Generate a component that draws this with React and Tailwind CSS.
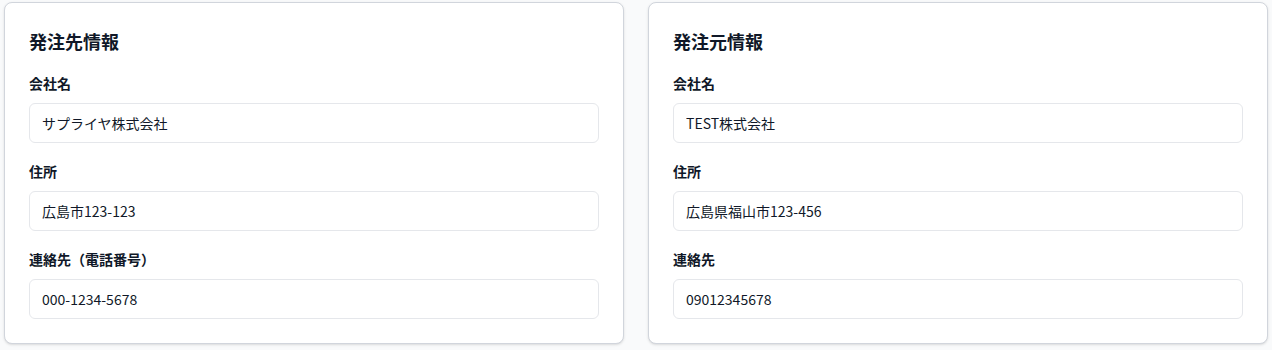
const font = { fontFamily: '"Noto Sans CJK JP", "Noto Sans", sans-serif' }

function Field({ label, value }) {
  return (
    <div>
      <label className="mb-3 block text-sm leading-4 font-semibold text-gray-900">{label}</label>
      <input
        readOnly
        value={value}
        className="h-10 w-full rounded-md border border-gray-200 bg-white px-3 text-sm text-gray-900 outline-none"
        style={font}
      />
    </div>
  )
}

function InfoCard({ title, fields }) {
  return (
    <div className="rounded-lg border border-gray-300 bg-white p-6 shadow-sm">
      <h2 className="mb-5 text-lg font-semibold text-gray-900">{title}</h2>
      <div className="space-y-5">
        {fields.map((f) => (
          <Field key={f.label} label={f.label} value={f.value} />
        ))}
      </div>
    </div>
  )
}

export default function App() {
  return (
    <div className="min-h-[350px] bg-gray-50 px-1 pt-[2px]" style={font}>
      <div className="grid grid-cols-2 gap-6">
        <InfoCard
          title="発注先情報"
          fields={[
            { label: '会社名', value: 'サプライヤ株式会社' },
            { label: '住所', value: '広島市123-123' },
            { label: '連絡先（電話番号）', value: '000-1234-5678' },
          ]}
        />
        <InfoCard
          title="発注元情報"
          fields={[
            { label: '会社名', value: 'TEST株式会社' },
            { label: '住所', value: '広島県福山市123-456' },
            { label: '連絡先', value: '09012345678' },
          ]}
        />
      </div>
    </div>
  )
}
